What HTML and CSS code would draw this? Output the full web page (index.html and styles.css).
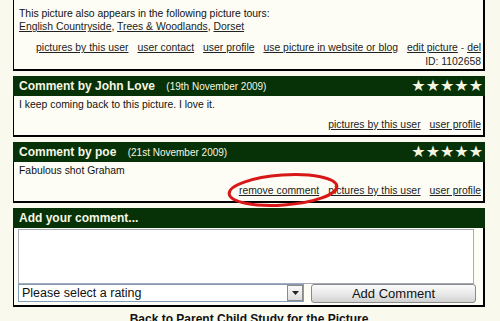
FILE: index.html
```html
<!DOCTYPE html>
<html lang="en">
  <head>
    <meta charset="UTF-8" />
    <title>Picture comments</title>
    <link rel="stylesheet" href="styles.css">
  </head>
  <body>
    <div class="page">
      <div class="box info-box">
        <p>This picture also appears in the following picture tours:</p>
        <p class="tours">
          <a href="#">English Countryside</a>, <a href="#">Trees &amp; Woodlands</a>, <a href="#">Dorset</a>
        </p>
        <div class="links links-top">
          <a href="#">pictures by this user</a>
          <a href="#">user contact</a>
          <a href="#">user profile</a>
          <a href="#">use picture in website or blog</a>
          <span><a href="#">edit picture</a> - <a href="#">del</a></span>
        </div>
        <div class="pic-id">ID: 1102658</div>
      </div>

      <div class="box comment">
        <div class="box-head">
          <h2>Comment by John Love <span class="date">(19th November 2009)</span></h2>
          <span class="stars">★★★★★</span>
        </div>
        <div class="box-body">
          <p>I keep coming back to this picture. I love it.</p>
          <div class="links">
            <a href="#">pictures by this user</a>
            <a href="#">user profile</a>
          </div>
        </div>
      </div>

      <div class="box comment">
        <div class="box-head">
          <h2>Comment by poe <span class="date">(21st November 2009)</span></h2>
          <span class="stars">★★★★★</span>
        </div>
        <div class="box-body">
          <p>Fabulous shot Graham</p>
          <div class="links">
            <span class="circled">
              <a href="#">remove comment</a>
              <svg class="ring" width="116" height="38" viewBox="0 0 116 38">
                <ellipse cx="58" cy="19" rx="54" ry="15" fill="none" stroke="#d81818" stroke-width="3" transform="rotate(-4 58 19)" />
              </svg>
            </span>
            <a href="#">pictures by this user</a>
            <a href="#">user profile</a>
          </div>
        </div>
      </div>

      <div class="box add-comment">
        <div class="box-head">
          <h2>Add your comment...</h2>
        </div>
        <form class="comment-form">
          <textarea class="comment-input"></textarea>
          <div class="form-row">
            <div class="rating">
              <span>Please select a rating</span>
              <span class="drop"><svg width="7" height="4" viewBox="0 0 7 4"><path d="M0 0h7L3.5 4z" fill="#222"/></svg></span>
            </div>
            <button type="button" class="add-button">Add Comment</button>
          </div>
        </form>
      </div>

      <div class="footer-title">Back to Parent Child Study for the Picture</div>
    </div>
  </body>
</html>
```

FILE: styles.css
```css
* {
  margin: 0;
  padding: 0;
  box-sizing: border-box;
}

body {
  font-family: "Liberation Sans", Arial, sans-serif;
  font-size: 10.4px;
  background: #f9f9ee;
  color: #111;
  overflow: hidden;
}

.page {
  padding: 0 15px 0 13px;
}

a {
  color: #222;
  text-decoration: underline;
}

.box {
  border: 1px solid #000;
  border-width: 1px 2px 2px 1px;
  background: #fdfdf5;
  margin-bottom: 5px;
}

.info-box {
  margin-top: -20px;
  padding: 26px 2px 4px 5px;
  line-height: 13px;
  height: 91px;
}

.links {
  display: flex;
  justify-content: flex-end;
  gap: 9px;
  line-height: 13px;
}

.links-top {
  margin-top: 8px;
  gap: 9px;
  white-space: nowrap;
  color: #555;
}

.pic-id {
  text-align: right;
  margin-top: 1px;
  color: #222;
}

.box-head {
  background: #073207;
  color: #f6f6e4;
  height: 20px;
  display: flex;
  align-items: center;
  justify-content: space-between;
  padding: 0 2px 0 6px;
  margin: -1px -2px 0 -1px;
}

.box-head h2 {
  font-size: 12px;
  font-weight: bold;
  font-family: "Liberation Sans", Arial, sans-serif;
}

.date {
  font-size: 10px;
  font-weight: normal;
  margin-left: 8px;
}

.stars {
  font-family: "DejaVu Sans", sans-serif;
  font-size: 16px;
  line-height: 20px;
  color: #f6f6e0;
}

.comment .box-body {
  height: 39px;
  padding: 2px 2px 0 5px;
  line-height: 13px;
}

.comment .box-body p {
  height: 20px;
}

.circled {
  position: relative;
}

.ring {
  position: absolute;
  left: -14px;
  top: -13px;
  pointer-events: none;
}

.comment-form {
  padding: 1px 9px 2px 4px;
}

.comment-input {
  display: block;
  width: 100%;
  height: 55px;
  border: 1px solid #a5acb5;
  background: #fff;
  resize: none;
  overflow-y: scroll;
}

.form-row {
  display: flex;
  justify-content: space-between;
  align-items: flex-start;
}

.rating {
  width: 286px;
  height: 18px;
  border: 1px solid #7f9db9;
  background: #fff;
  display: flex;
  align-items: center;
  justify-content: space-between;
  font-size: 12.5px;
  padding-left: 3px;
  color: #111;
}

.drop {
  width: 16px;
  height: 16px;
  border: 1px solid #8a8a8a;
  background: linear-gradient(#fafafa, #dcdcdc);
  display: flex;
  align-items: center;
  justify-content: center;
}

.add-button {
  width: 165px;
  height: 19px;
  border: 1px solid #8a8a8a;
  border-radius: 3px;
  background: linear-gradient(#fbfbfb, #e6e6e6 60%, #d2d2d2);
  font-family: "Liberation Sans", Arial, sans-serif;
  font-size: 13px;
  color: #111;
  margin-right: -2px;
}

.footer-title {
  text-align: center;
  font-weight: bold;
  font-size: 12px;
  margin-top: 5px;
}
```
